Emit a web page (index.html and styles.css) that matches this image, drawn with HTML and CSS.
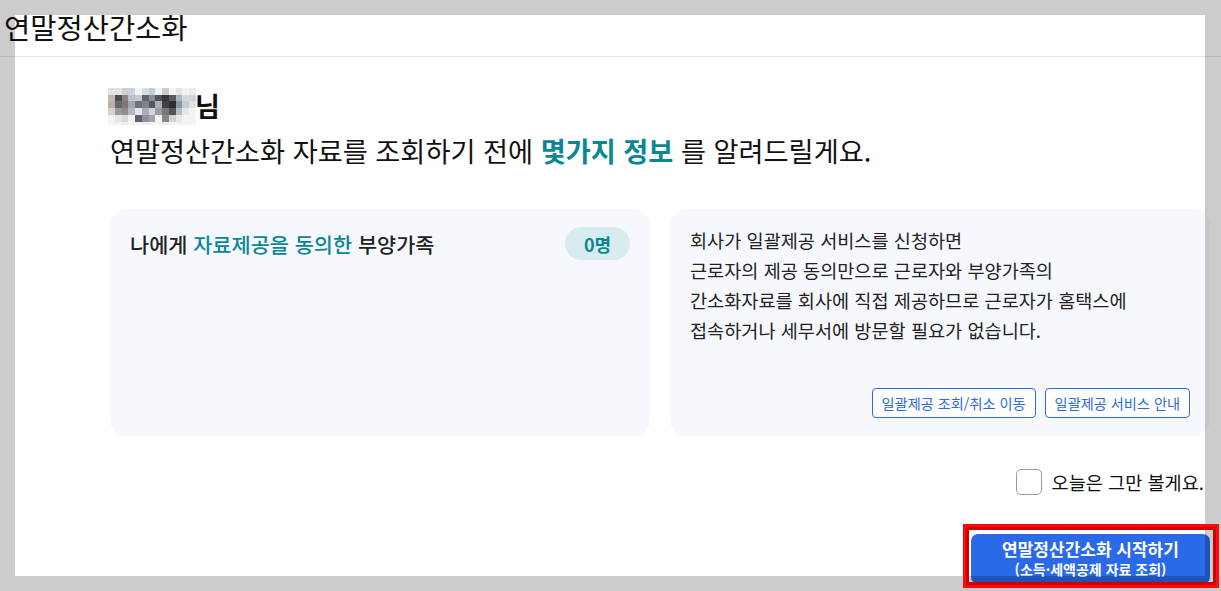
FILE: index.html
```html
<!DOCTYPE html>
<html lang="ko">
<head>
    <meta charset="UTF-8">
    <meta name="viewport" content="width=device-width, initial-scale=1.0">
    <title>연말정산간소화</title>
    <link rel="stylesheet" href="styles.css">
</head>
<body>
    <!-- Page header -->
    <header class="top-bar">
        <h1>연말정산간소화</h1>
    </header>

    <main class="content">
        <!-- Greeting (name is masked) -->
        <section class="greeting">
            <p class="greeting-name">
                <svg class="name-mask" width="88" height="37" viewBox="0 0 13 5.5" shape-rendering="crispEdges" aria-hidden="true">
                    <rect x="0" y="0" width="13" height="5.5" fill="#f4f3f2"/>
                    <rect x="0" y="0" width="1" height="1" fill="#e6e1dc"/>
                    <rect x="1" y="0" width="1" height="1" fill="#dfe4ea"/>
                    <rect x="2" y="0" width="1" height="1" fill="#d2cbc6"/>
                    <rect x="3" y="0" width="1" height="1" fill="#c9d3dc"/>
                    <rect x="5" y="0" width="1" height="1" fill="#d8dbe0"/>
                    <rect x="6" y="0" width="1" height="1" fill="#c4ccd4"/>
                    <rect x="8" y="0" width="1" height="1" fill="#cfc8c8"/>
                    <rect x="10" y="0" width="1" height="1" fill="#dfe5eb"/>
                    <rect x="12" y="0" width="1" height="1" fill="#e9ecef"/>

                    <rect x="0" y="1" width="1" height="1" fill="#c2b7b1"/>
                    <rect x="1" y="1" width="1" height="1" fill="#4f4d4f"/>
                    <rect x="2" y="1" width="1" height="1" fill="#8a827e"/>
                    <rect x="3" y="1" width="1" height="1" fill="#b7c2cc"/>
                    <rect x="4" y="1" width="1" height="1" fill="#c7c7c9"/>
                    <rect x="5" y="1" width="1" height="1" fill="#5d6670"/>
                    <rect x="6" y="1" width="1" height="1" fill="#8b9096"/>
                    <rect x="7" y="1" width="1" height="1" fill="#4f5560"/>
                    <rect x="8" y="1" width="1" height="1" fill="#3c3436"/>
                    <rect x="9" y="1" width="1" height="1" fill="#5f5b5b"/>
                    <rect x="10" y="1" width="1" height="1" fill="#a9b4bf"/>
                    <rect x="11" y="1" width="1" height="1" fill="#d5d9dd"/>
                    <rect x="12" y="1" width="1" height="1" fill="#cfd5db"/>

                    <rect x="0" y="2" width="1" height="1" fill="#b9b0ab"/>
                    <rect x="1" y="2" width="1" height="1" fill="#656a70"/>
                    <rect x="2" y="2" width="1" height="1" fill="#7d7875"/>
                    <rect x="3" y="2" width="1" height="1" fill="#9fa6ad"/>
                    <rect x="4" y="2" width="1" height="1" fill="#6f7378"/>
                    <rect x="5" y="2" width="1" height="1" fill="#7c848c"/>
                    <rect x="6" y="2" width="1" height="1" fill="#525862"/>
                    <rect x="7" y="2" width="1" height="1" fill="#a8aeb4"/>
                    <rect x="8" y="2" width="1" height="1" fill="#434043"/>
                    <rect x="9" y="2" width="1" height="1" fill="#2f2d2f"/>
                    <rect x="10" y="2" width="1" height="1" fill="#8c949c"/>
                    <rect x="11" y="2" width="1" height="1" fill="#c6ccd2"/>
                    <rect x="12" y="2" width="1" height="1" fill="#dde1e5"/>

                    <rect x="0" y="3" width="1" height="1" fill="#d8d2ce"/>
                    <rect x="1" y="3" width="1" height="1" fill="#9a9998"/>
                    <rect x="2" y="3" width="1" height="1" fill="#8f8e8e"/>
                    <rect x="3" y="3" width="1" height="1" fill="#b3b8bd"/>
                    <rect x="4" y="3" width="1" height="1" fill="#e3e6ea"/>
                    <rect x="5" y="3" width="1" height="1" fill="#a7adb3"/>
                    <rect x="6" y="3" width="1" height="1" fill="#d0d4d8"/>
                    <rect x="7" y="3" width="1" height="1" fill="#9a9da2"/>
                    <rect x="8" y="3" width="1" height="1" fill="#7a7577"/>
                    <rect x="9" y="3" width="1" height="1" fill="#565456"/>
                    <rect x="10" y="3" width="1" height="1" fill="#b8bcc0"/>
                    <rect x="11" y="3" width="1" height="1" fill="#e4e7ea"/>

                    <rect x="1" y="4" width="1" height="1" fill="#e8e6e4"/>
                    <rect x="2" y="4" width="1" height="1" fill="#d9dadb"/>
                    <rect x="4" y="4" width="1" height="1" fill="#5d636b"/>
                    <rect x="5" y="4" width="1" height="1" fill="#8c9298"/>
                    <rect x="6" y="4" width="1" height="1" fill="#a0a5aa"/>
                    <rect x="8" y="4" width="1" height="1" fill="#8a8688"/>
                    <rect x="9" y="4" width="1" height="1" fill="#d2d0d0"/>
                    <rect x="10" y="4" width="1" height="1" fill="#e6e8ea"/>

                    <rect x="2" y="5" width="1" height="0.5" fill="#ecebea"/>
                    <rect x="5" y="5" width="1" height="0.5" fill="#ebecee"/>
                    <rect x="8" y="5" width="1" height="0.5" fill="#eceaea"/>
                </svg><span>님</span>
            </p>
            <p class="greeting-lead">
                연말정산간소화 자료를 조회하기 전에 <strong>몇가지 정보</strong> 를 알려드릴게요.
            </p>
        </section>

        <!-- Info cards -->
        <div class="cards">
            <div class="card card-family">
                <div class="card-head">
                    <span class="card-title">나에게 <em>자료제공을 동의한</em> 부양가족</span>
                    <span class="count-pill">0명</span>
                </div>
            </div>
            <div class="card card-info">
                <p class="info-text">
                    회사가 일괄제공 서비스를 신청하면<br>
                    근로자의 제공 동의만으로 근로자와 부양가족의<br>
                    간소화자료를 회사에 직접 제공하므로 근로자가 홈택스에<br>
                    접속하거나 세무서에 방문할 필요가 없습니다.
                </p>
                <div class="card-actions">
                    <button class="outline-btn">일괄제공 조회/취소 이동</button>
                    <button class="outline-btn">일괄제공 서비스 안내</button>
                </div>
            </div>
        </div>

        <!-- Hide for today -->
        <label class="skip-today">
            <span class="checkbox"></span>
            <span>오늘은 그만 볼게요.</span>
        </label>

        <!-- Start button -->
        <div class="start-row">
            <button class="start-btn">
                <span class="start-main">연말정산간소화 시작하기</span>
                <span class="start-sub">(소득·세액공제 자료 조회)</span>
            </button>
        </div>
    </main>

    <!-- Dimmed frame around the captured area, and the red highlight -->
    <div class="shade"></div>
    <div class="highlight"></div>
</body>
</html>
```

FILE: styles.css
```css
* {
    margin: 0;
    padding: 0;
    box-sizing: border-box;
}

html, body {
    height: 100%;
    overflow: hidden;
}

body {
    font-family: "Noto Sans CJK KR", "Noto Sans", sans-serif;
    background: #fff;
    color: #111;
}

/* Header */
.top-bar {
    height: 57px;
    padding: 9px 0 0 4px;
    border-bottom: 1px solid #e4e4e9;
}

.top-bar h1 {
    font-size: 28.5px;
    font-weight: 400;
    line-height: 36px;
}

/* Main column */
.content {
    width: 1100px;
    margin-left: 110px;
}

.greeting {
    padding-top: 27px;
}

.greeting-name {
    display: flex;
    align-items: center;
    height: 42px;
    font-size: 27px;
    font-weight: 700;
}

.name-mask {
    margin: 2px -1px 0 -2px;
}

.greeting-lead {
    font-size: 27.2px;
    font-weight: 400;
    line-height: 48px;
}

.greeting-lead strong {
    color: #0b8793;
    font-weight: 700;
}

/* Cards */
.cards {
    display: grid;
    grid-template-columns: 540px 540px;
    gap: 20px;
    margin-top: 35px;
}

.card {
    height: 227px;
    background: #f7f8fd;
    border-radius: 16px;
    padding: 18px 20px;
}

.card-head {
    display: flex;
    align-items: center;
    justify-content: space-between;
}

.card-title {
    font-size: 20.8px;
    font-weight: 500;
    color: #222;
}

.card-title em {
    font-style: normal;
    color: #0b8793;
}

.count-pill {
    width: 65px;
    height: 33px;
    border-radius: 17px;
    background: #d8ecef;
    color: #0b8793;
    font-size: 18px;
    font-weight: 700;
    display: flex;
    align-items: center;
    justify-content: center;
}

.card-info {
    display: flex;
    flex-direction: column;
    justify-content: space-between;
    padding: 16px 20px 18px;
}

.info-text {
    font-size: 18.6px;
    line-height: 30px;
    color: #222;
}

.card-actions {
    display: flex;
    justify-content: flex-end;
    gap: 9px;
}

.outline-btn {
    height: 30px;
    padding: 0 9px;
    border: 1px solid #2b6fe3;
    border-radius: 4px;
    background: #fff;
    color: #2b6ad8;
    font-family: inherit;
    font-size: 14.2px;
}

/* Checkbox row */
.skip-today {
    display: flex;
    align-items: center;
    justify-content: flex-end;
    gap: 10px;
    margin-top: 32px;
    padding-right: 6px;
    font-size: 18.6px;
    color: #111;
}

.checkbox {
    width: 26px;
    height: 26px;
    border: 1px solid #999;
    border-radius: 5px;
    background: #fff;
}

/* Start button */
.start-row {
    display: flex;
    justify-content: flex-end;
    margin-top: 39px;
}

.start-btn {
    width: 239px;
    height: 50px;
    border: none;
    border-radius: 7px;
    background: #2a6ae8;
    color: #fff;
    font-family: inherit;
    display: flex;
    flex-direction: column;
    align-items: center;
    justify-content: center;
    line-height: 20px;
}

.start-main {
    font-size: 17px;
    font-weight: 700;
}

.start-sub {
    font-size: 14px;
    font-weight: 700;
}

/* Dim frame: a clear window with a wide shadow around it */
.shade {
    position: fixed;
    left: 15px;
    top: 15px;
    width: 1190px;
    height: 561px;
    box-shadow: 0 0 0 2000px rgba(0, 0, 0, 0.2);
    pointer-events: none;
}

/* Red annotation box */
.highlight {
    position: fixed;
    left: 963px;
    top: 524px;
    width: 256px;
    height: 64px;
    border: 3px solid #ff0a0a;
    box-shadow: inset 0 0 0 3px #cf0000;
    pointer-events: none;
}
```
